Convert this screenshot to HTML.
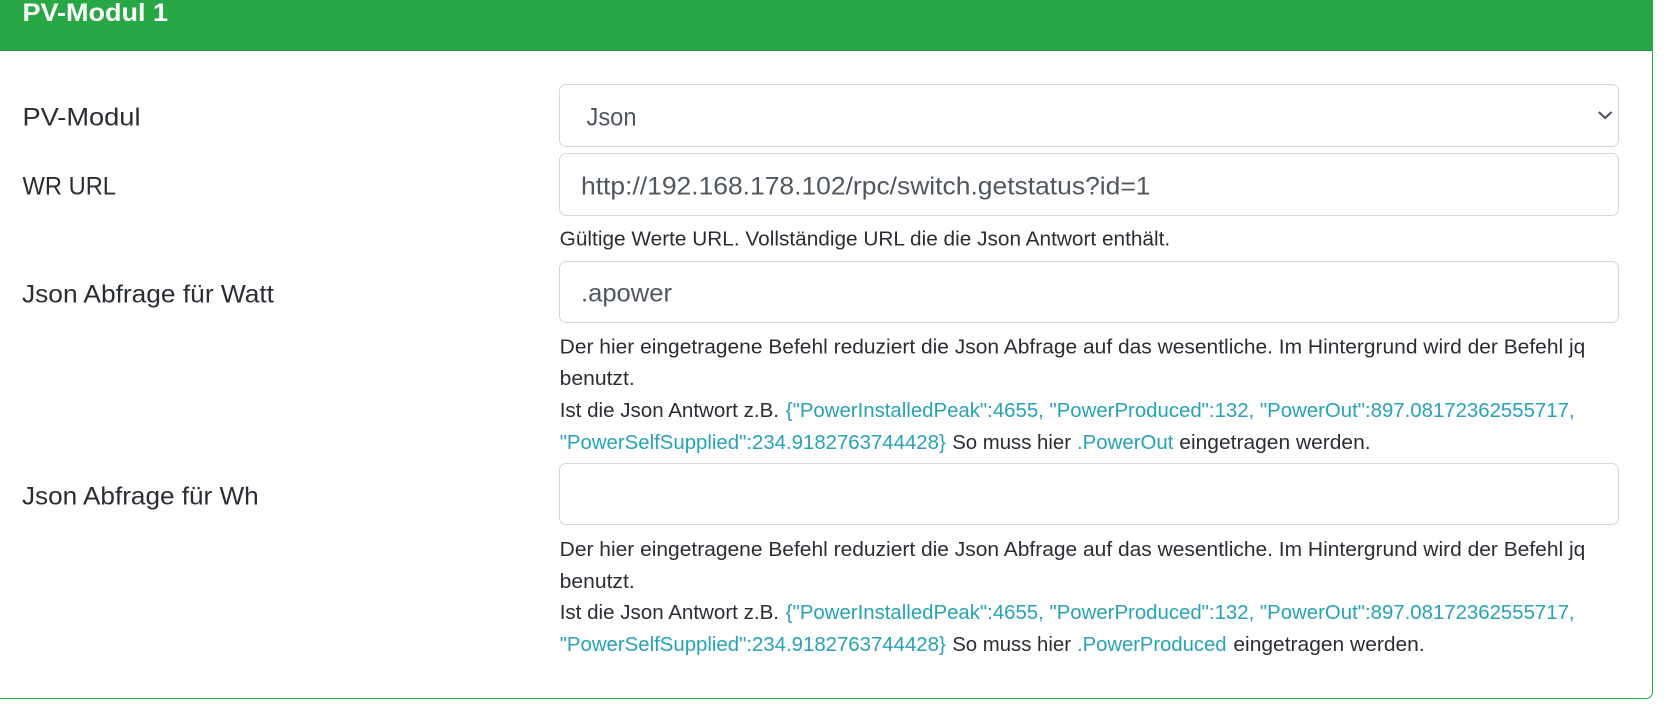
<!DOCTYPE html>
<html lang="de">
<head>
<meta charset="utf-8">
<title>PV-Modul 1</title>
<style>
html,body{margin:0;padding:0;width:1676px;height:724px;overflow:hidden;background:#fff}
.card{position:absolute;left:-8px;top:-20px;width:1659px;height:717px;border:1px solid #28a745;border-radius:7px;box-sizing:content-box;overflow:hidden}
.head{position:absolute;left:0;top:0;width:100%;height:69px;background:#28a745;border-bottom:1px solid #23963f}
.f{position:absolute;left:559px;width:1060px;box-sizing:border-box;background:#fff;border:1.5px solid #d3d8de;border-radius:7px}
svg{position:absolute;left:0;top:0}
text{font-family:"Liberation Sans",Arial,sans-serif;fill:#2a2e33;font-size:20.6px}
.l{font-size:25.4px}
.i{font-size:25.4px;fill:#50575e}
.c{fill:#25a3b7}
</style>
</head>
<body>
<div class="card"><div class="head"></div></div>
<div class="f" style="top:84px;height:63px"></div>
<div class="f" style="top:153px;height:63px"></div>
<div class="f" style="top:261px;height:62px"></div>
<div class="f" style="top:463px;height:62px"></div>
<svg width="1676" height="724" viewBox="0 0 1676 724" xmlns="http://www.w3.org/2000/svg">
<text x="22.5" y="21" textLength="145.5" lengthAdjust="spacingAndGlyphs" style="font-size:25.4px;font-weight:bold;fill:#fff">PV-Modul 1</text>

<text class="l" x="22.5" y="125.7" textLength="118" lengthAdjust="spacingAndGlyphs">PV-Modul</text>
<text class="i" x="586.5" y="125.7" textLength="50" lengthAdjust="spacingAndGlyphs">Json</text>
<polyline points="1598.8,112 1605.2,118 1611.6,112" fill="none" stroke="#495057" stroke-width="2"/>

<text class="l" x="22.5" y="194.5" textLength="93.5" lengthAdjust="spacingAndGlyphs">WR URL</text>
<text class="i" x="581" y="194.5" textLength="569.5" lengthAdjust="spacingAndGlyphs">http://192.168.178.102/rpc/switch.getstatus?id=1</text>
<text x="559.7" y="245.7" textLength="610.5" lengthAdjust="spacingAndGlyphs">Gültige Werte URL. Vollständige URL die die Json Antwort enthält.</text>

<text class="l" x="22" y="302.3" textLength="252" lengthAdjust="spacingAndGlyphs">Json Abfrage für Watt</text>
<text class="i" x="581" y="301.7" textLength="91" lengthAdjust="spacingAndGlyphs">.apower</text>
<text x="559.7" y="353.3" textLength="1025.6" lengthAdjust="spacingAndGlyphs">Der hier eingetragene Befehl reduziert die Json Abfrage auf das wesentliche. Im Hintergrund wird der Befehl jq</text>
<text x="559.7" y="385" textLength="75" lengthAdjust="spacingAndGlyphs">benutzt.</text>
<text x="559.7" y="417" textLength="219.3" lengthAdjust="spacingAndGlyphs">Ist die Json Antwort z.B.</text>
<text class="c" x="785.8" y="417" textLength="788.8" lengthAdjust="spacingAndGlyphs">{"PowerInstalledPeak":4655, "PowerProduced":132, "PowerOut":897.08172362555717,</text>
<text class="c" x="559.7" y="449" textLength="386.1" lengthAdjust="spacingAndGlyphs">"PowerSelfSupplied":234.9182763744428}</text>
<text x="952.2" y="449" textLength="118.8" lengthAdjust="spacingAndGlyphs">So muss hier</text>
<text class="c" x="1077" y="449" textLength="96.4" lengthAdjust="spacingAndGlyphs">.PowerOut</text>
<text x="1179.3" y="449" textLength="191.3" lengthAdjust="spacingAndGlyphs">eingetragen werden.</text>

<text class="l" x="22" y="504.3" textLength="236.7" lengthAdjust="spacingAndGlyphs">Json Abfrage für Wh</text>
<text x="559.7" y="556" textLength="1025.6" lengthAdjust="spacingAndGlyphs">Der hier eingetragene Befehl reduziert die Json Abfrage auf das wesentliche. Im Hintergrund wird der Befehl jq</text>
<text x="559.7" y="588" textLength="75" lengthAdjust="spacingAndGlyphs">benutzt.</text>
<text x="559.7" y="619" textLength="219.3" lengthAdjust="spacingAndGlyphs">Ist die Json Antwort z.B.</text>
<text class="c" x="785.8" y="619" textLength="788.8" lengthAdjust="spacingAndGlyphs">{"PowerInstalledPeak":4655, "PowerProduced":132, "PowerOut":897.08172362555717,</text>
<text class="c" x="559.7" y="651" textLength="386.1" lengthAdjust="spacingAndGlyphs">"PowerSelfSupplied":234.9182763744428}</text>
<text x="952.2" y="651" textLength="118.8" lengthAdjust="spacingAndGlyphs">So muss hier</text>
<text class="c" x="1077" y="651" textLength="149.5" lengthAdjust="spacingAndGlyphs">.PowerProduced</text>
<text x="1233.4" y="651" textLength="191.3" lengthAdjust="spacingAndGlyphs">eingetragen werden.</text>
</svg>
</body>
</html>
